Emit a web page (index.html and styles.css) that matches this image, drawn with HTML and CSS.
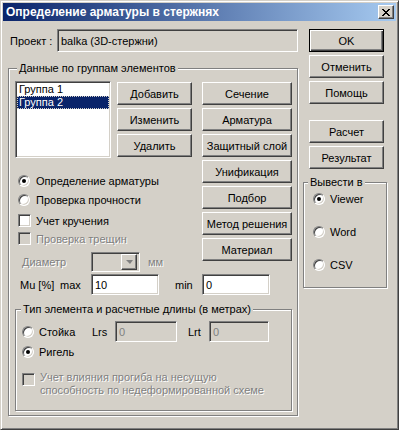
FILE: index.html
```html
<!DOCTYPE html>
<html lang="ru">
<head>
<meta charset="utf-8">
<link rel="stylesheet" href="styles.css">
</head>
<body>
<div class="window">
    <div class="titlebar">
        <span class="caption">Определение арматуры в стержнях</span>
        <div class="close-btn">
            <svg width="8" height="7" viewBox="0 0 8 7"><path d="M0 0h2v1H0zM6 0h2v1H6zM1 1h2v1H1zM5 1h2v1H5zM2 2h4v1H2zM3 3h2v1H3zM2 4h4v1H2zM1 5h2v1H1zM5 5h2v1H5zM0 6h2v1H0zM6 6h2v1H6z" fill="#000"/></svg>
        </div>
    </div>

    <div class="client">
        <div class="main">
            <div class="project-row">
                <span class="project-label">Проект :</span>
                <div class="edit readonly project-edit">balka (3D-стержни)</div>
            </div>

            <div class="group data-group">
                <span class="legend">Данные по группам элементов</span>
                <div class="top-area">
                    <div class="left-area">
                        <div class="list-row">
                            <div class="listbox">
                                <div class="item">Группа 1</div>
                                <div class="item selected">Группа 2</div>
                            </div>
                            <div class="btn-col col2">
                                <div class="btn">Добавить</div>
                                <div class="btn">Изменить</div>
                                <div class="btn">Удалить</div>
                            </div>
                        </div>
                        <div class="opt-row first"><span class="radio checked"></span><span>Определение арматуры</span></div>
                        <div class="opt-row"><span class="radio"></span><span>Проверка прочности</span></div>
                        <div class="opt-row check-row"><span class="checkbox"></span><span>Учет кручения</span></div>
                        <div class="opt-row last disabled"><span class="checkbox"></span><span>Проверка трещин</span></div>
                        <div class="diam-row disabled">
                            <span class="diam-label">Диаметр</span>
                            <div class="edit readonly combo"><span class="drop"><span class="arrow"></span></span></div>
                            <span class="unit">мм</span>
                        </div>
                    </div>
                    <div class="btn-col col3">
                        <div class="btn">Сечение</div>
                        <div class="btn">Арматура</div>
                        <div class="btn">Защитный слой</div>
                        <div class="btn">Унификация</div>
                        <div class="btn">Подбор</div>
                        <div class="btn">Метод решения</div>
                        <div class="btn">Материал</div>
                    </div>
                </div>

                <div class="mu-row">
                    <span class="mu-label">Mu [%]</span>
                    <span class="max-label">max</span>
                    <div class="edit mu-edit">10</div>
                    <span class="min-label">min</span>
                    <div class="edit mu-edit">0</div>
                </div>

                <div class="group type-group">
                    <span class="legend">Тип элемента и расчетные длины (в метрах)</span>
                    <div class="type-row">
                        <div class="type-opt"><span class="radio"></span><span>Стойка</span></div>
                        <span class="len-label">Lrs</span>
                        <div class="edit readonly len-edit lrs">0</div>
                        <span class="len-label lrt-label">Lrt</span>
                        <div class="edit readonly len-edit lrt">0</div>
                    </div>
                    <div class="type-row second">
                        <div class="type-opt"><span class="radio checked"></span><span>Ригель</span></div>
                    </div>
                    <div class="deflect-row disabled">
                        <span class="checkbox"></span>
                        <span class="deflect-text">Учет влияния прогиба на несущую<br>способность по недеформированной схеме</span>
                    </div>
                </div>
            </div>
        </div>

        <div class="side">
            <div class="btn default side-btn">OK</div>
            <div class="btn side-btn">Отменить</div>
            <div class="btn side-btn">Помощь</div>
            <div class="btn side-btn calc">Расчет</div>
            <div class="btn side-btn">Результат</div>

            <div class="group out-group">
                <span class="legend">Вывести в</span>
                <div class="out-row"><span class="radio checked"></span><span>Viewer</span></div>
                <div class="out-row"><span class="radio"></span><span>Word</span></div>
                <div class="out-row"><span class="radio"></span><span>CSV</span></div>
            </div>
        </div>
    </div>
</div>
</body>
</html>
```

FILE: styles.css
```css
* {
    box-sizing: border-box;
}

body {
    margin: 0;
    background-color: #d4d0c8;
    font-family: "Liberation Sans", Arial, sans-serif;
    font-size: 11px;
    color: #000;
}

.window {
    width: 399px;
    height: 430px;
    padding: 2px;
    border: 1px solid;
    border-color: #d4d0c8 #404040 #404040 #d4d0c8;
    box-shadow: inset 1px 1px #fff, inset -1px -1px #808080;
    background-color: #d4d0c8;
}

.titlebar {
    height: 18px;
    display: flex;
    align-items: center;
    justify-content: space-between;
    padding: 0 2px 0 3px;
    background: linear-gradient(to right, #0a246a, #a6caf0);
}

.caption {
    color: #fff;
    font-family: "Liberation Sans", Arial, sans-serif;
    font-weight: bold;
    font-size: 12px;
}

.close-btn {
    width: 16px;
    height: 14px;
    display: flex;
    align-items: center;
    justify-content: center;
    border: 1px solid;
    border-color: #fff #404040 #404040 #fff;
    box-shadow: inset -1px -1px #808080;
    background-color: #d4d0c8;
}

.client {
    display: flex;
    padding: 8px 0 0 5px;
}

.main {
    width: 290px;
}

/* controls */

.btn {
    height: 23px;
    display: flex;
    align-items: center;
    justify-content: center;
    border: 1px solid;
    border-color: #fff #404040 #404040 #fff;
    box-shadow: inset -1px -1px #808080;
    background-color: #d4d0c8;
    white-space: nowrap;
}

.btn.default {
    border-color: #000;
    box-shadow: inset 1px 1px #fff, inset -1px -1px #404040, inset -2px -2px #808080;
}

.edit {
    display: flex;
    align-items: center;
    padding: 0 3px;
    border: 1px solid;
    border-color: #808080 #fff #fff #808080;
    box-shadow: inset 1px 1px #404040, inset -1px -1px #d4d0c8;
    background-color: #fff;
}

.edit.readonly {
    background-color: #d4d0c8;
}

.radio {
    position: relative;
    width: 12px;
    height: 12px;
    flex: none;
    border-radius: 50%;
    border: 1px solid;
    border-color: #808080 #fff #fff #808080;
    box-shadow: inset 1px 1px #404040, inset -1px -1px #d4d0c8;
    background-color: #fff;
}

.radio.checked:after {
    content: " ";
    position: absolute;
    left: 3px;
    top: 3px;
    width: 4px;
    height: 4px;
    border-radius: 50%;
    background-color: #000;
}

.checkbox {
    width: 13px;
    height: 13px;
    flex: none;
    border: 1px solid;
    border-color: #808080 #fff #fff #808080;
    box-shadow: inset 1px 1px #404040, inset -1px -1px #d4d0c8;
    background-color: #fff;
}

.disabled {
    color: #808080;
    text-shadow: 1px 1px #fff;
}

.disabled .checkbox {
    background-color: #d4d0c8;
}

.group {
    position: relative;
    border: 1px solid #808080;
    box-shadow: inset 1px 1px #fff, 1px 1px #fff;
}

.legend {
    position: absolute;
    top: -7px;
    line-height: 13px;
    padding: 0 2px;
    background-color: #d4d0c8;
    white-space: nowrap;
}

/* project */

.project-row {
    height: 23px;
    display: flex;
    align-items: center;
    padding-left: 2px;
}

.project-edit {
    width: 241px;
    height: 23px;
    margin-left: auto;
}

/* data group */

.data-group {
    margin-top: 16px;
    height: 348px;
    padding: 12px 5px 0 6px;
}

.data-group > .legend {
    left: 8px;
}

.top-area {
    display: flex;
    justify-content: space-between;
}

.left-area {
    width: 177px;
}

.list-row {
    display: flex;
    gap: 6px;
}

.listbox {
    width: 96px;
    height: 77px;
    padding: 1px;
    border: 1px solid;
    border-color: #808080 #fff #fff #808080;
    box-shadow: inset 1px 1px #404040, inset -1px -1px #d4d0c8;
    background-color: #fff;
}

.item {
    height: 13px;
    line-height: 13px;
    padding-left: 2px;
}

.item.selected {
    background-color: #0a246a;
    color: #fff;
    outline: 1px dotted #d4d0c8;
    outline-offset: -1px;
}

.btn-col {
    display: flex;
    flex-direction: column;
    gap: 3px;
    margin-top: 1px;
}

.col2 .btn {
    width: 75px;
}

.col3 .btn {
    width: 90px;
}

.opt-row {
    height: 19px;
    display: flex;
    align-items: center;
    gap: 6px;
    padding-left: 3px;
}

.opt-row.first {
    margin-top: 13px;
}

.opt-row.check-row {
    margin-top: 2px;
    gap: 5px;
}

.opt-row.last {
    height: 17px;
    gap: 5px;
}

.diam-row {
    height: 20px;
    margin-top: 5px;
    display: flex;
    align-items: center;
    padding-left: 7px;
}

.diam-label {
    width: 69px;
}

.combo {
    width: 49px;
    height: 20px;
    padding: 2px;
    justify-content: flex-end;
}

.drop {
    width: 16px;
    height: 16px;
    display: flex;
    align-items: center;
    justify-content: center;
    border: 1px solid;
    border-color: #fff #404040 #404040 #fff;
    box-shadow: inset -1px -1px #808080;
    background-color: #d4d0c8;
}

.arrow {
    width: 0;
    height: 0;
    border-left: 4px solid transparent;
    border-right: 3px solid transparent;
    border-top: 4px solid #808080;
}

.unit {
    margin-left: 8px;
}

.mu-row {
    height: 21px;
    margin-top: 2px;
    display: flex;
    align-items: center;
    padding-left: 5px;
}

.mu-label {
    width: 40px;
}

.max-label {
    width: 31px;
}

.mu-edit {
    width: 68px;
    height: 21px;
}

.min-label {
    width: 27px;
    margin-left: 16px;
}

/* type group */

.type-group {
    width: 277px;
    height: 102px;
    margin-top: 14px;
    padding: 11px 0 0 6px;
}

.type-group > .legend {
    left: 5px;
}

.type-row {
    height: 21px;
    display: flex;
    align-items: center;
}

.type-row.second {
    height: 20px;
}

.type-opt {
    width: 70px;
    display: flex;
    align-items: center;
    gap: 5px;
}

.len-label {
    width: 23px;
}

.len-label.lrt-label {
    width: 21px;
    margin-left: 11px;
}

.len-edit {
    height: 21px;
    color: #808080;
}

.len-edit.lrs {
    width: 62px;
}

.len-edit.lrt {
    width: 60px;
}

.deflect-row {
    margin-top: 9px;
    display: flex;
    gap: 5px;
}

.deflect-row .checkbox {
    margin-top: 2px;
}

.deflect-text {
    line-height: 13px;
}

/* side column */

.side {
    width: 84px;
    margin-left: 5px;
}

.side-btn {
    width: 75px;
    margin: 0 0 3px 6px;
}

.side-btn.calc {
    margin-top: 16px;
}

.out-group {
    height: 106px;
    margin-top: 13px;
    padding: 7px 0 0 9px;
}

.out-group > .legend {
    left: 4px;
}

.out-row {
    height: 18px;
    display: flex;
    align-items: center;
    gap: 5px;
    margin-bottom: 15px;
}
```
